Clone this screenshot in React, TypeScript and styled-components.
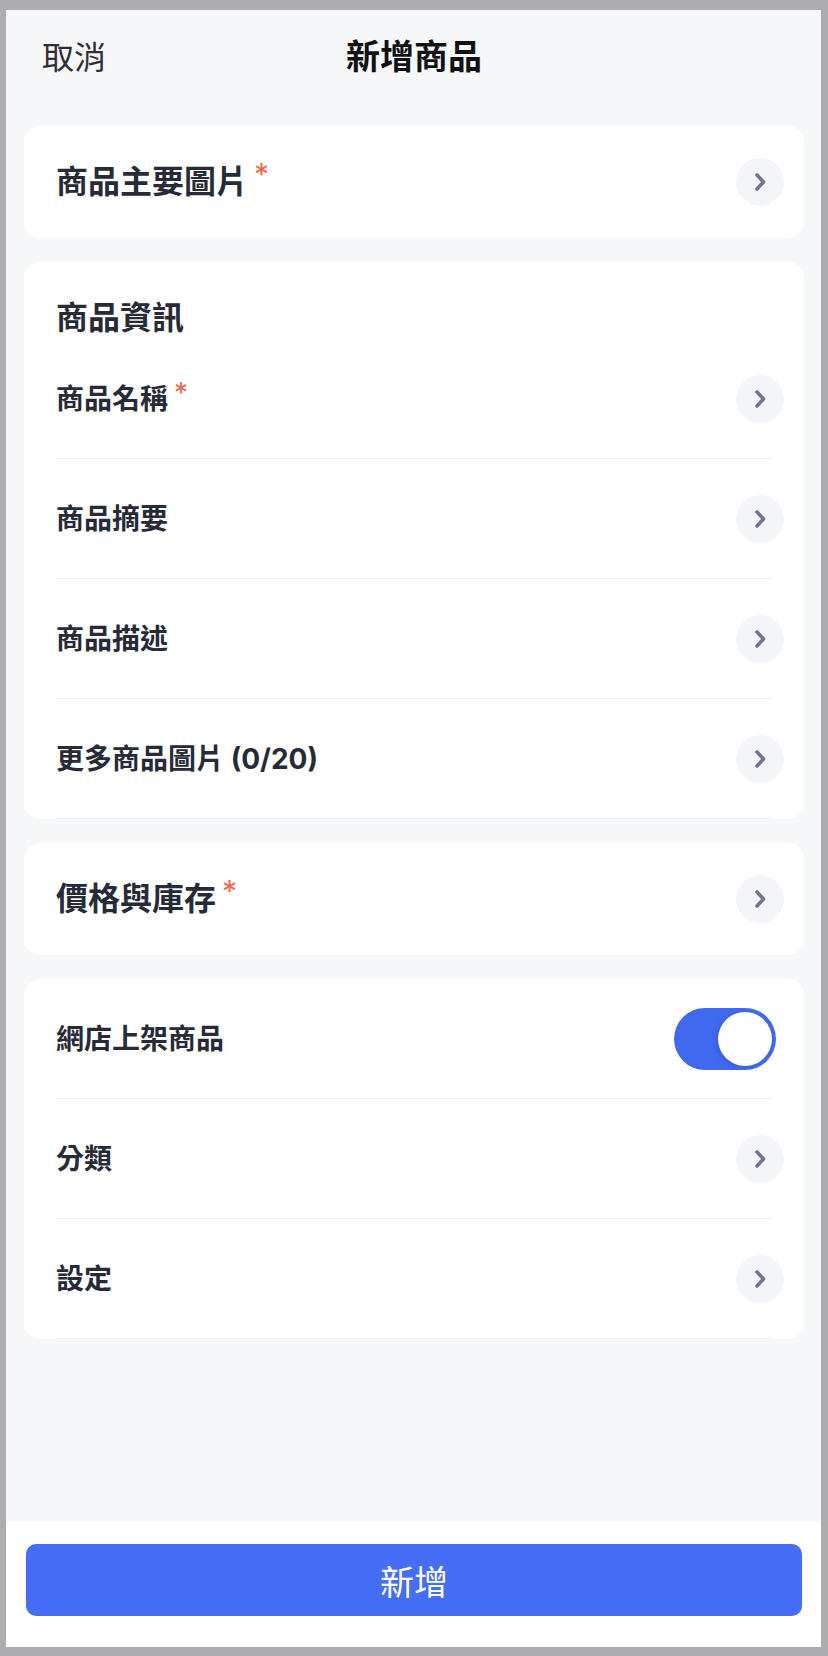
import React, { useState } from "react";
import styled, { createGlobalStyle } from "styled-components";

const GlobalStyle = createGlobalStyle`
  html, body {
    margin: 0;
    padding: 0;
    background: #adadaf;
  }
  body {
    font-family: Inter, "Noto Sans CJK TC", "Noto Sans", sans-serif;
  }
  * {
    box-sizing: border-box;
  }
`;

type RowType = {
  label: string;
  required?: boolean;
};

const infoRows: RowType[] = [
  { label: "商品名稱", required: true },
  { label: "商品摘要" },
  { label: "商品描述" },
  { label: "更多商品圖片 (0/20)" },
];

const Chevron = () => (
  <SChevron>
    <svg width="14" height="20" viewBox="0 0 14 20" fill="none">
      <path
        d="M4 3l6.5 7L4 17"
        stroke="#6f7690"
        strokeWidth="3.6"
        strokeLinecap="round"
        strokeLinejoin="round"
      />
    </svg>
  </SChevron>
);

const Label = (props: RowType & { big?: boolean }) => {
  const { label, required, big } = props;
  return (
    <SLabel $big={big}>
      {label}
      {required && <SStar $big={big}>*</SStar>}
    </SLabel>
  );
};

const App = () => {
  const [online, setOnline] = useState(true);

  return (
    <>
      <GlobalStyle />
      <SFrame>
        <SMain>
          <SHeader>
            <SCancel>取消</SCancel>
            <STitle>新增商品</STitle>
          </SHeader>

          <SCard>
            <SRow $single>
              <Label label="商品主要圖片" required big />
              <Chevron />
            </SRow>
          </SCard>

          <SCard>
            <SCardTitle>商品資訊</SCardTitle>
            {infoRows.map((row) => (
              <SRow key={row.label}>
                <Label label={row.label} required={row.required} />
                <Chevron />
              </SRow>
            ))}
          </SCard>

          <SCard>
            <SRow $single>
              <Label label="價格與庫存" required big />
              <Chevron />
            </SRow>
          </SCard>

          <SCard>
            <SRow>
              <Label label="網店上架商品" />
              <SToggle $on={online} onClick={() => setOnline(!online)}>
                <SKnob $on={online} />
              </SToggle>
            </SRow>
            <SRow>
              <Label label="分類" />
              <Chevron />
            </SRow>
            <SRow>
              <Label label="設定" />
              <Chevron />
            </SRow>
          </SCard>
        </SMain>

        <SFooter>
          <SSubmit>新增</SSubmit>
        </SFooter>
      </SFrame>
    </>
  );
};

const SFrame = styled.div`
  margin: 10px 7px 9px 6px;
  height: 1637px;
  display: flex;
  flex-direction: column;
  background: #f6f7f9;
`;

const SMain = styled.main`
  flex: 1;
  display: flex;
  flex-direction: column;
  gap: 24px;
  padding: 0 17px 0 18px;
`;

const SHeader = styled.header`
  height: 96px;
  margin-bottom: -4px;
  display: flex;
  align-items: center;
  justify-content: center;
  position: relative;
`;

const SCancel = styled.span`
  position: absolute;
  left: 18px;
  top: 30px;
  font-size: 32px;
  line-height: 36px;
  color: #2f3036;
`;

const STitle = styled.h1`
  margin: 0;
  font-size: 34px;
  line-height: 40px;
  font-weight: 700;
  color: #111114;
  margin-top: -2px;
`;

const SCard = styled.section`
  background: #fff;
  border-radius: 16px;
  padding: 0 20px 0 32px;
  display: flex;
  flex-direction: column;
`;

const SCardTitle = styled.h2`
  margin: 0;
  height: 77px;
  padding-top: 36px;
  font-size: 32px;
  line-height: 40px;
  font-weight: 700;
  color: #272b37;
`;

const SRow = styled.div<{ $single?: boolean }>`
  height: ${(p) => (p.$single ? "112px" : "120px")};
  margin-right: 12px;
  display: flex;
  align-items: center;
  justify-content: space-between;
  border-bottom: ${(p) => (p.$single ? "none" : "1px solid #eceef3")};
`;

const SLabel = styled.div<{ $big?: boolean }>`
  display: flex;
  align-items: flex-start;
  font-size: ${(p) => (p.$big ? "32px" : "28px")};
  line-height: ${(p) => (p.$big ? "40px" : "36px")};
  font-weight: 700;
  color: #272b37;
`;

const SStar = styled.span<{ $big?: boolean }>`
  margin-left: 6px;
  margin-top: ${(p) => (p.$big ? "-8px" : "-6px")};
  font-size: ${(p) => (p.$big ? "30px" : "28px")};
  font-weight: 400;
  color: #eb6a4c;
`;

const SChevron = styled.span`
  width: 48px;
  height: 48px;
  margin-right: -12px;
  border-radius: 50%;
  background: #f4f5f8;
  display: flex;
  align-items: center;
  justify-content: center;
  flex-shrink: 0;
`;

const SToggle = styled.button<{ $on: boolean }>`
  width: 102px;
  height: 62px;
  margin-right: -4px;
  padding: 0;
  border: none;
  border-radius: 31px;
  background: ${(p) => (p.$on ? "#4169f0" : "#e3e5ea")};
  position: relative;
  cursor: pointer;
`;

const SKnob = styled.span<{ $on: boolean }>`
  position: absolute;
  top: 4px;
  left: ${(p) => (p.$on ? "44px" : "4px")};
  width: 54px;
  height: 54px;
  border-radius: 50%;
  background: #fff;
  box-shadow: -2px 1px 4px rgba(30, 50, 140, 0.25);
`;

const SFooter = styled.footer`
  background: #fff;
  padding: 23px 19px 31px 20px;
`;

const SSubmit = styled.button`
  width: 100%;
  height: 72px;
  border: none;
  border-radius: 10px;
  background: #456df6;
  color: #fff;
  font-family: Inter, "Noto Sans CJK TC", sans-serif;
  font-size: 34px;
  font-weight: 400;
  cursor: pointer;
`;

export default App;
